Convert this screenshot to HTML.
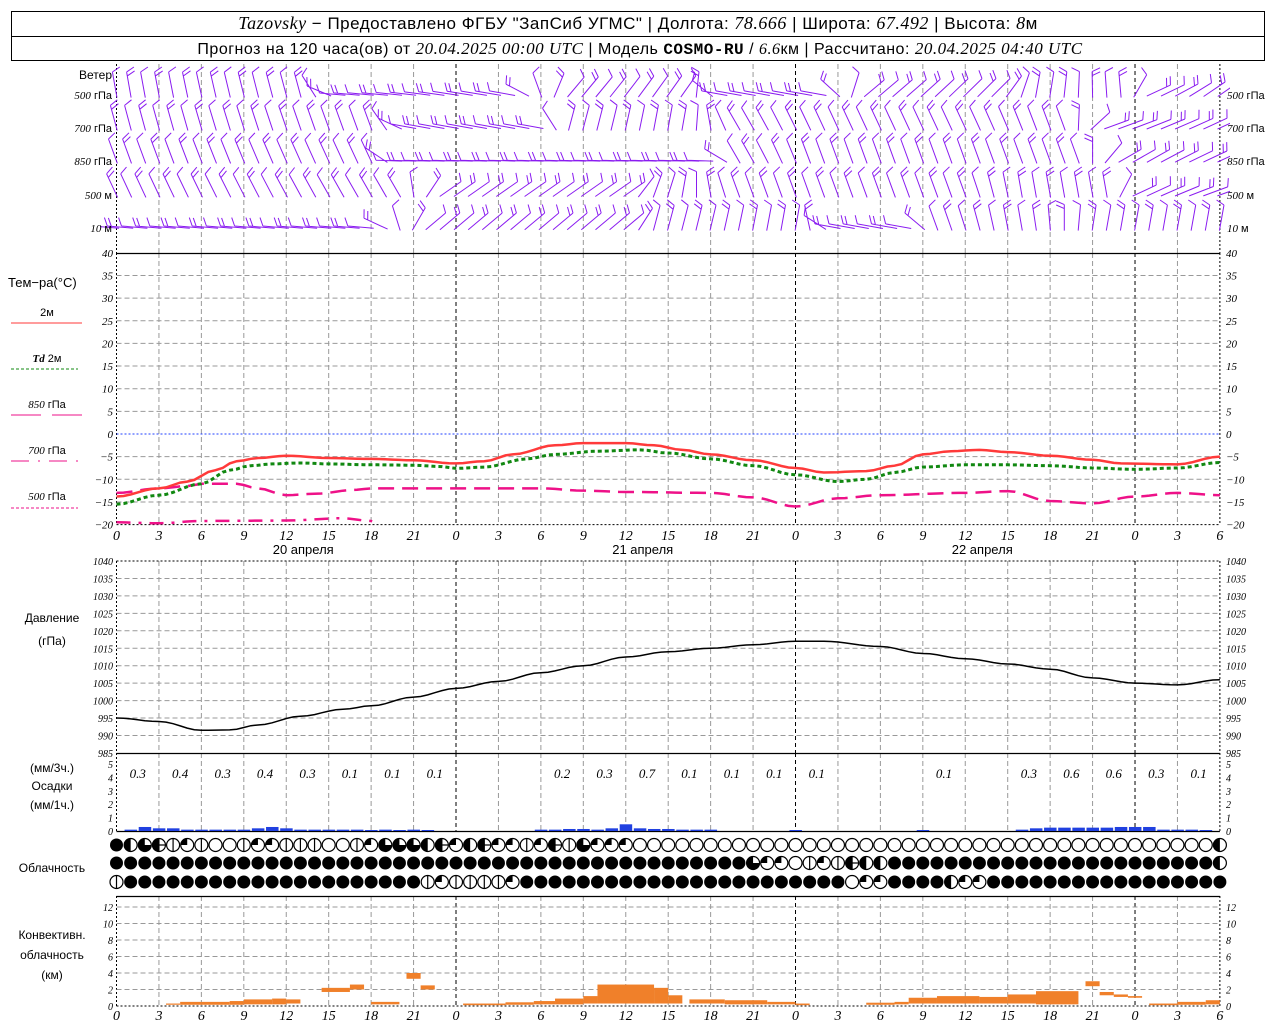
<!DOCTYPE html>
<html><head><meta charset="utf-8">
<style>
html,body{margin:0;padding:0;background:#fff;}
svg{display:block;font-family:"Liberation Sans",sans-serif;}
.it{font-family:"Liberation Serif",serif;font-style:italic;}
</style></head>
<body>
<svg id="s" width="1280" height="1024" xmlns="http://www.w3.org/2000/svg">
<defs><clipPath id="wc"><rect x="100" y="64" width="1130" height="189"/></clipPath></defs>
<rect x="11.5" y="11.5" width="1253" height="49" fill="none" stroke="#000"/>
<line x1="11" y1="36.5" x2="1265" y2="36.5" stroke="#000"/>
<text x="638" y="29" font-size="17" text-anchor="middle" letter-spacing="0.5"><tspan class="it" font-size="18">Tazovsky</tspan> − Предоставлено ФГБУ "ЗапСиб УГМС" | Долгота: <tspan class="it" font-size="18">78.666</tspan> | Широта: <tspan class="it" font-size="18">67.492</tspan> | Высота: <tspan class="it" font-size="18">8</tspan>м</text>
<text x="640" y="54" font-size="16" text-anchor="middle" letter-spacing="0.5">Прогноз на 120 часа(ов) от <tspan class="it" font-size="17">20.04.2025 00:00 UTC</tspan>  | Модель <tspan font-family="Liberation Mono" font-weight="bold">COSMO-RU</tspan> / <tspan class="it">6.6</tspan>км | Рассчитано: <tspan class="it" font-size="17">20.04.2025 04:40 UTC</tspan></text>
<g id="g"></g>
</svg>
<script>
var NS="http://www.w3.org/2000/svg",G=document.getElementById('g');
function X(h){return 116.5+h*14.146;}
function el(t,a,txt){var e=document.createElementNS(NS,t);for(var k in a)e.setAttribute(k,a[k]);if(txt!==undefined)e.textContent=txt;G.appendChild(e);return e;}
function line(x1,y1,x2,y2,c,w,d){var a={x1:x1,y1:y1,x2:x2,y2:y2,stroke:c,'stroke-width':w||1};if(d)a['stroke-dasharray']=d;return el('line',a);}
function txt(x,y,s,o){o=o||{};var a={x:x,y:y,'font-size':o.fs||11};if(o.a)a['text-anchor']=o.a;if(o.it)a['class']='it';if(o.c)a.fill=o.c;return el('text',a,s);}
var segs=[[64,253],[253,525],[561,753],[753,831],[896,1006]];
segs.forEach(function(s){for(var h=0;h<=78;h+=3){var day=(h%24==0);var ax=(h==0||h==78);line(X(h),s[0],X(h),s[1],(day||ax)?'#000':'#999',1,ax?'2,2':(day?'4,3':'5,3'));}});
function TY(t){return 434-t*4.53;}
for(var t=-15;t<=35;t+=5){if(t==0)continue;line(X(0),TY(t),X(78),TY(t),'#999',1,'5,3');}
line(X(0),253.5,X(78),253.5,'#000',1.3);
line(X(0),TY(0),X(78),TY(0),'#2040ff',1,'2,2');
line(X(0),TY(-20),X(78),TY(-20),'#000',1,'2,2');
for(var t=-20;t<=40;t+=5){txt(113,TY(t)+4,String(t).replace('-','−'),{a:'end',it:1,fs:11});txt(1226,TY(t)+4,String(t).replace('-','−'),{it:1,fs:11});}
function PY(p){return 561+(1040-p)*3.49;}
for(var p=990;p<=1035;p+=5)line(X(0),PY(p),X(78),PY(p),'#999',1,'5,3');
line(X(0),561,X(78),561,'#000',1,'2,2');line(X(0),753.5,X(78),753.5,'#000',1.3);
for(var p=985;p<=1040;p+=5){txt(113,PY(p)+4,p,{a:'end',it:1,fs:10});txt(1226,PY(p)+4,p,{it:1,fs:10});}
function RY(v){return 831-v*13.4;}
line(X(0),831.5,X(78),831.5,'#000',1.3);
for(var v=0;v<=5;v++){txt(113,RY(v)+4,v,{a:'end',it:1,fs:10});txt(1226,RY(v)+4,v,{it:1,fs:10});}
function CY(k){return 1006-k*8.25;}
line(X(0),896.5,X(78),896.5,'#000',1.3);
for(var k=2;k<=12;k+=2)line(X(0),CY(k),X(78),CY(k),'#999',1,'5,3');
line(X(0),1006,X(78),1006,'#000',1,'2,2');
for(var k=0;k<=12;k+=2){txt(113,CY(k)+4,k,{a:'end',it:1,fs:10});txt(1226,CY(k)+4,k,{it:1,fs:10});}
for(var h=0;h<=78;h+=3){var l=String(h%24);txt(X(h),540,l,{a:'middle',it:1,fs:14});txt(X(h),1020,l,{a:'middle',it:1,fs:14});}
['20 апреля','21 апреля','22 апреля'].forEach(function(s,i){txt(X(13.2+24*i),554,s,{a:'middle',fs:13});});
function interp(kf,h){for(var i=0;i<kf.length-1;i++){if(h>=kf[i][0]&&h<=kf[i+1][0]){var f=(h-kf[i][0])/(kf[i+1][0]-kf[i][0]);f=(1-Math.cos(f*Math.PI))/2;return kf[i][1]+(kf[i+1][1]-kf[i][1])*f;}}return kf[kf.length-1][1];}
function curve(kf,fy,h0,h1,c,w,d){var pts=[];for(var h=h0;h<=h1+0.001;h+=0.5)pts.push(X(h).toFixed(1)+','+fy(interp(kf,h)).toFixed(1));var a={points:pts.join(' '),fill:'none',stroke:c,'stroke-width':w};if(d)a['stroke-dasharray']=d;el('polyline',a);}
var T2=[[0,-13.8],[3,-12],[5,-10.5],[7,-8],[8.5,-6],[10,-5.3],[12,-4.8],[15,-5.3],[18,-5.5],[21,-5.8],[24,-6.5],[26,-6],[28,-4.5],[31,-2.5],[33,-2],[36,-2],[38,-2.5],[40,-3.5],[42,-4.5],[45,-5.8],[48,-7.5],[50,-8.5],[53,-8.2],[55,-7],[57,-4.5],[59,-3.8],[61,-3.5],[63,-4],[66,-4.8],[69,-5.7],[71,-6.5],[75,-6.7],[78,-5]];
var TD=[[0,-15.5],[3,-13.5],[6,-11],[8,-8],[9.5,-7],[11,-6.6],[13,-6.4],[15,-6.6],[18,-6.8],[21,-6.9],[23,-7.2],[24,-7.6],[26,-7.3],[29,-5.5],[31,-4.5],[34,-3.8],[37,-3.5],[39,-4.2],[42,-5.5],[45,-7],[48,-9],[51,-10.5],[53,-10],[55,-8.5],[57,-7.3],[60,-6.8],[63,-6.8],[66,-7],[69,-7.5],[72,-7.8],[75,-7.5],[78,-6.3]];
var T85=[[0,-13],[3,-12],[5,-11.5],[6,-11],[8.5,-11],[10,-12],[12,-13.5],[14,-13.2],[17,-12.3],[18,-12],[24,-12],[30,-12],[33,-12.5],[36,-12.8],[42,-13],[45,-14],[48,-16],[51,-14.2],[54,-13.5],[60,-13],[63,-12.6],[66,-14.8],[69,-15.3],[72,-13.8],[75,-13],[78,-13.5]];
var T70=[[0,-19.5],[3,-19.7],[6,-19.2],[12,-19.1],[16,-18.6],[18,-19.2],[18.6,-20]];
curve(T70,TY,0,18.6,'#ee1188',2.5,'14,8,3,8');
curve(T85,TY,0,78,'#ee1188',2.5,'16,8');
curve(TD,TY,0,78,'#118811',3,'4,3');
curve(T2,TY,0,78,'#ff3a3a',2.5);
var PR=[[0,995],[3,994],[6,991.5],[8,991.6],[10,993],[13,995.5],[16,997.5],[18,998.5],[21,1001],[24,1003.5],[27,1005.5],[30,1008],[33,1010],[36,1012.5],[39,1014],[42,1015],[45,1016],[48,1017],[50,1017],[54,1015.5],[57,1013.5],[60,1012],[63,1010.5],[66,1009],[69,1006.5],[72,1005],[75,1004.5],[78,1006]];
curve(PR,PY,0,78,'#000',1.5);
var pv={0:'0.3',1:'0.4',2:'0.3',3:'0.4',4:'0.3',5:'0.1',6:'0.1',7:'0.1',10:'0.2',11:'0.3',12:'0.7',13:'0.1',14:'0.1',15:'0.1',16:'0.1',19:'0.1',21:'0.3',22:'0.6',23:'0.6',24:'0.3',25:'0.1'};
for(var i in pv)txt(X(i*3+1.5),778,pv[i],{a:'middle',it:1,fs:13});
var pb=[[1,.1],[2,.3],[3,.2],[4,.2],[5,.1],[6,.1],[7,.1],[8,.1],[9,.1],[10,.2],[11,.3],[12,.2],[13,.1],[14,.1],[15,.1],[16,.1],[17,.1],[18,.05],[19,.1],[20,.05],[21,.1],[22,.05],[30,.1],[31,.1],[32,.15],[33,.15],[34,.1],[35,.2],[36,.5],[37,.2],[38,.15],[39,.15],[40,.1],[41,.1],[42,.1],[48,.02],[57,.02],[64,.1],[65,.2],[66,.25],[67,.25],[68,.25],[69,.25],[70,.25],[71,.3],[72,.3],[73,.3],[74,.1],[75,.1],[76,.1],[77,.05]];
pb.forEach(function(b){var hh=Math.max(1,b[1]*13.4);el('rect',{x:X(b[0]-0.5)+1,y:831-hh,width:12.5,height:hh,fill:'#2040e0'});});
var cb=[[3.5,4.5,.15,.3],[4.5,6,.15,.5],[6,8,.15,.5],[8,9,.15,.6],[9,11,.2,.8],[11,12,.2,.9],[12,13,.3,.8],[14.5,16.5,1.7,2.2],[16.5,17.5,2.0,2.6],[18,20,.2,.5],[20.5,21.5,3.3,4.0],[21.5,22.5,2.0,2.5],[24.5,27.5,.1,.3],[27.5,29.5,.15,.45],[29.5,31,.2,.6],[31,33,.2,.9],[33,34,.3,1.2],[34,38,.3,2.6],[38,39,.3,2.2],[39,40,.3,1.3],[40.5,43,.3,.8],[43,46,.2,.7],[46,48,.2,.5],[48,49,.1,.3],[53,55,.15,.4],[55,56,.2,.5],[56,58,.3,1.0],[58,61,.3,1.2],[61,63,.3,1.1],[63,65,.3,1.4],[65,68,.2,1.8],[68.5,69.5,2.4,3.0],[69.5,70.5,1.3,1.7],[70.5,71.5,1.1,1.4],[71.5,72.5,1.0,1.2],[73,75,.1,.3],[75,77,.15,.5],[77,78,.2,.7]];
cb.forEach(function(b){el('rect',{x:X(b[0]),y:CY(b[3]),width:X(b[1])-X(b[0]),height:CY(b[2])-CY(b[3]),fill:'#f0802a'});});
var rows=[
'FBRHVQVEEVQQVVVEEVQRRRBHQBHQQVQHVRQQQ'+'E'.repeat(41)+'B',
'F'.repeat(45)+'RQQEVQVHBB'+'F'.repeat(23)+'B',
'V'+'F'.repeat(21)+'VQVVVVQ'+'F'.repeat(22)+'FEQQFFFFBQQ'+'F'.repeat(17)
];
var ry=[845,863,882];
function csym(cx,cy,t){var r=6.5;
 if(t=='F'){el('circle',{cx:cx,cy:cy,r:r,fill:'#000'});return;}
 el('circle',{cx:cx,cy:cy,r:r,fill:'#fff',stroke:'#000','stroke-width':1.2});
 if(t=='V')line(cx,cy-r,cx,cy+r,'#000',1.2);
 if(t=='H'){el('path',{d:'M'+cx+' '+(cy-r)+' A'+r+' '+r+' 0 0 0 '+cx+' '+(cy+r)+'Z',fill:'#000'});line(cx-r,cy,cx+r,cy,'#000',1.2);line(cx,cy-r,cx,cy+r,'#000',1.2);}
 if(t=='B')el('path',{d:'M'+cx+' '+(cy-r)+' A'+r+' '+r+' 0 0 0 '+cx+' '+(cy+r)+'Z',fill:'#000'});
 if(t=='Q')el('path',{d:'M'+cx+' '+cy+' L'+cx+' '+(cy-r)+' A'+r+' '+r+' 0 0 0 '+(cx-r)+' '+cy+'Z',fill:'#000'});
 if(t=='R')el('path',{d:'M'+cx+' '+cy+' L'+cx+' '+(cy-r)+' A'+r+' '+r+' 0 1 0 '+(cx+r)+' '+cy+'Z',fill:'#000'});
}
rows.forEach(function(s,ri){for(var h=0;h<=78;h++)csym(X(h),ry[ri],s[h]||'F');});
var lv=[95,128,161,195,228];
var ang=[
[[0,100],[13,105],[16,175],[28,170],[32,50],[40,55],[43,170],[50,170],[53,40],[62,45],[65,80],[71,95],[73,25],[78,35]],
[[0,105],[18,110],[21,170],[30,170],[32,75],[40,80],[44,120],[50,115],[60,115],[67,110],[70,20],[78,25]],
[[0,110],[18,115],[20,178],[42,178],[44,120],[50,110],[68,110],[71,30],[78,25]],
[[0,115],[20,120],[23,35],[36,35],[38,70],[44,110],[60,110],[64,100],[70,100],[72,25],[78,20]],
[[0,175],[18,175],[22,40],[36,40],[38,75],[48,80],[51,170],[56,170],[58,110],[64,100],[70,80],[78,80]]];
var P=[];
for(var L=0;L<5;L++){for(var h=0;h<=78;h++){var th=interp(ang[L],h)*Math.PI/180;var len=26;var x=X(h),y=lv[L];
 var c=Math.cos(th),s=-Math.sin(th);
 var x0=x-c*len*0.1,y0=y-s*len*0.1,x1=x+c*len*0.9,y1=y+s*len*0.9;
 P.push('M'+x0.toFixed(1)+' '+y0.toFixed(1)+'L'+x1.toFixed(1)+' '+y1.toFixed(1));
 var n=1+((h*7+L*3)%2);
 var px=-s,py=c; if(py>0){px=-px;py=-py;}
 for(var b=0;b<n;b++){var bx=x1-c*b*4,by=y1-s*b*4;var bl=9;
  P.push('M'+bx.toFixed(1)+' '+by.toFixed(1)+'l'+((px*0.9+c*0.4)*bl).toFixed(1)+' '+((py*0.9+s*0.4)*bl).toFixed(1));}
}}
el('path',{d:P.join(''),stroke:'#8a1cf0','stroke-width':1,fill:'none','clip-path':'url(#wc)'});
txt(112,79,'Ветер',{a:'end',fs:12});
var ln=[['500',' гПа'],['700',' гПа'],['850',' гПа'],['500',' м'],['10','  м']];
lv.forEach(function(y,i){var t=el('text',{x:112,y:y+4,'font-size':11,'text-anchor':'end'});t.innerHTML='<tspan class="it">'+ln[i][0]+'</tspan>'+ln[i][1];var t2=el('text',{x:1227,y:y+4,'font-size':11});t2.innerHTML='<tspan class="it">'+ln[i][0]+'</tspan>'+ln[i][1];});
txt(8,287,'Тем−ра(°C)',{fs:13});
txt(47,316,'2м',{a:'middle',fs:11});line(11,323,82,323,'#ff3a3a',1);
var t=el('text',{x:47,y:362,'font-size':11,'text-anchor':'middle'});t.innerHTML='<tspan class="it" font-weight="bold">Td</tspan>  2м';line(11,369,78,369,'#118811',1,'3,2');
t=el('text',{x:47,y:408,'font-size':11,'text-anchor':'middle'});t.innerHTML='<tspan class="it">850</tspan> гПа';line(11,415,41,415,'#ee1188',1);line(52,415,82,415,'#ee1188',1);
t=el('text',{x:47,y:454,'font-size':11,'text-anchor':'middle'});t.innerHTML='<tspan class="it">700</tspan> гПа';line(11,461,78,461,'#ee1188',1,'18,9,2,9');
t=el('text',{x:47,y:500,'font-size':11,'text-anchor':'middle'});t.innerHTML='<tspan class="it">500</tspan> гПа';line(11,508,78,508,'#ee1188',1,'3,2');
txt(52,622,'Давление',{a:'middle',fs:12});txt(52,645,'(гПа)',{a:'middle',fs:12});
txt(52,772,'(мм/3ч.)',{a:'middle',fs:12});txt(52,790,'Осадки',{a:'middle',fs:12});txt(52,809,'(мм/1ч.)',{a:'middle',fs:12});
txt(52,872,'Облачность',{a:'middle',fs:12});
txt(52,939,'Конвективн.',{a:'middle',fs:12});txt(52,959,'облачность',{a:'middle',fs:12});txt(52,979,'(км)',{a:'middle',fs:12});
</script>
</body></html>
